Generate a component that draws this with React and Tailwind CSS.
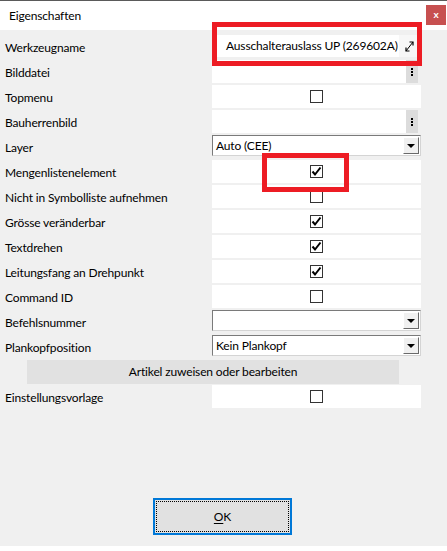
import React from 'react';

const rows = [
  { label: 'Werkzeugname', type: 'name', value: 'Ausschalterauslass UP (269602A)' },
  { label: 'Bilddatei', type: 'file' },
  { label: 'Topmenu', type: 'check', checked: false },
  { label: 'Bauherrenbild', type: 'file' },
  { label: 'Layer', type: 'combo', value: 'Auto (CEE)' },
  { label: 'Mengenlistenelement', type: 'check', checked: true },
  { label: 'Nicht in Symbolliste aufnehmen', type: 'check', checked: false },
  { label: 'Grösse veränderbar', type: 'check', checked: true },
  { label: 'Textdrehen', type: 'check', checked: true },
  { label: 'Leitungsfang an Drehpunkt', type: 'check', checked: true },
  { label: 'Command ID', type: 'check', checked: false },
  { label: 'Befehlsnummer', type: 'combo', value: '' },
  { label: 'Plankopfposition', type: 'combo', value: 'Kein Plankopf' },
  { type: 'button', label: 'Artikel zuweisen oder bearbeiten' },
  { label: 'Einstellungsvorlage', type: 'check', checked: false },
];

function CheckBox({ checked }) {
  return (
    <div className="w-[13px] h-[13px] border border-[#333333] bg-white flex items-center justify-center">
      {checked && (
        <svg width="11" height="11" viewBox="0 0 11 11">
          <path d="M1.5 5.5 L4 8.5 L9.5 1.5" fill="none" stroke="#000" strokeWidth="2" />
        </svg>
      )}
    </div>
  );
}

function DotsButton() {
  // the little "..." browse button, drawn vertical
  return (
    <div className="w-[12px] h-[23px] bg-[#dcdcdc] flex flex-col items-center justify-center gap-[1px]">
      <span className="w-[2px] h-[2px] bg-black" />
      <span className="w-[2px] h-[2px] bg-black" />
      <span className="w-[2px] h-[2px] bg-black" />
    </div>
  );
}

function Combo({ value }) {
  return (
    <div className="w-[209px] h-[21px] bg-white border border-[#7a7a7a] border-b-[#d4d4d4] border-r-[#d4d4d4] flex items-center">
      <span className="flex-1 pl-[3px] leading-none">{value}</span>
      <div className="w-[16px] h-[17px] mr-[1px] bg-[#f0f0f0] border border-t-white border-l-white border-b-[#696969] border-r-[#696969] flex items-center justify-center">
        <svg width="8" height="4" viewBox="0 0 8 4">
          <path d="M0 0 H8 L4 4 Z" fill="#000" />
        </svg>
      </div>
    </div>
  );
}

function Value({ row }) {
  if (row.type === 'name') {
    return (
      <div className="w-[209px] h-[23px] flex">
        <div className="w-[187px] h-[22px] bg-white flex items-center pl-[14px] whitespace-nowrap">{row.value}</div>
        <div className="w-[20px] h-[22px] bg-[#f7f7f7] flex items-center justify-center">
          <svg width="9" height="11" viewBox="0 0 9 11">
            <path d="M8 1 L1 10" stroke="#000" strokeWidth="1" fill="none" />
            <path d="M4.5 1 H8 V4.5" stroke="#000" strokeWidth="1.2" fill="none" />
            <path d="M1 6.5 V10 H4.5" stroke="#000" strokeWidth="1.2" fill="none" />
          </svg>
        </div>
      </div>
    );
  }
  if (row.type === 'file') {
    return (
      <div className="h-[23px] flex">
        <div className="w-[194px] h-[23px] bg-white" />
        <DotsButton />
      </div>
    );
  }
  if (row.type === 'check') {
    return (
      <div className="w-[209px] h-[23px] bg-white flex items-center justify-center">
        <CheckBox checked={row.checked} />
      </div>
    );
  }
  return <Combo value={row.value} />;
}

export default function App() {
  return (
    <div className="w-[447px] h-[551px] bg-white relative text-[12px] tracking-[-0.15px] text-black font-['Lato',sans-serif]">
      {/* title bar */}
      <div className="h-[30px] border-t border-[#5a5a5a] flex items-center justify-between">
        <span className="pl-[9px] pt-[1px]">Eigenschaften</span>
        <div className="w-[20px] h-[20px] mr-[1px] mb-[1px] bg-[#c75050] flex items-center justify-center text-white text-[10px] font-bold leading-none pb-[2px]">
          x
        </div>
      </div>

      {/* body */}
      <div className="h-[516px] bg-[#f0f0f0] pt-[5px] flex flex-col">
        {rows.map((row, i) =>
          row.type === 'button' ? (
            <div key={i} className="h-[25px] pl-[27px]">
              <div className="w-[372px] h-[24px] bg-[#e1e1e1] flex items-center justify-center">{row.label}</div>
            </div>
          ) : (
            <div key={i} className="h-[25px] flex">
              <div className="w-[212px] h-[25px] pl-[5px] pt-[1px] flex items-center whitespace-nowrap">{row.label}</div>
              <Value row={row} />
            </div>
          )
        )}

        <div className="flex-1" />
        <div className="pl-[153px] pb-[11px]">
          <button className="w-[139px] h-[37px] bg-[#e1e1e1] border-2 border-[#0078d7] p-[1px]">
            <div className="w-full h-full border border-dotted border-black flex items-center justify-center">
              <span><span className="underline underline-offset-2">O</span>K</span>
            </div>
          </button>
        </div>
      </div>

      {/* red highlight annotations */}
      <div className="absolute left-[212px] top-[22px] w-[210px] h-[44px] border-[5px] border-[#ed1c24]" />
      <div className="absolute left-[262px] top-[153px] w-[87px] h-[39px] border-[5px] border-[#ed1c24]" />
    </div>
  );
}
